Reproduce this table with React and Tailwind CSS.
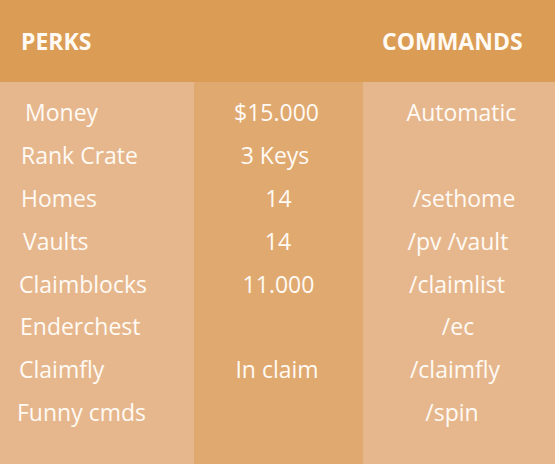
const ROWS = [
  { perk: "Money", pl: "pl-[25px]", value: "$15.000", vn: "pr-[4px]", cmd: "Automatic", cn: "pl-[5px]" },
  { perk: "Rank Crate", pl: "pl-[21px]", value: "3 Keys", vn: "pr-[7px]", cmd: "", cn: "" },
  { perk: "Homes", pl: "pl-[21px]", value: "14", vn: "pl-0", cmd: "/sethome", cn: "pl-[10px]" },
  { perk: "Vaults", pl: "pl-[23px]", value: "14", vn: "pr-[1px]", cmd: "/pv /vault", cn: "pr-[2px]" },
  { perk: "Claimblocks", pl: "pl-[19px]", value: "11.000", vn: "pl-0", cmd: "/claimlist", cn: "pr-[4px]" },
  { perk: "Enderchest", pl: "pl-[20px]", value: "", vn: "", cmd: "/ec", cn: "pr-[2px]" },
  { perk: "Claimfly", pl: "pl-[19px]", value: "In claim", vn: "pr-[3px]", cmd: "/claimfly", cn: "pr-[8px]" },
  { perk: "Funny cmds", pl: "pl-[17px]", value: "", vn: "", cmd: "/spin", cn: "pr-[14px]" },
];

export default function App() {
  return (
    <div className="w-[555px] h-[464px] overflow-hidden text-[#fffaf4] font-['Open_Sans',sans-serif]">
      {/* header */}
      <div className="flex h-[82px] items-center bg-[#db9d55] text-[23px] font-bold leading-[30px]">
        <div className="w-[194px] pl-[21px]">PERKS</div>
        <div className="w-[169px]"></div>
        <div className="w-[192px] pl-[19px]">COMMANDS</div>
      </div>

      {/* body: three coloured columns */}
      <div className="grid h-[382px] grid-cols-[194px_169px_192px] text-[23px]">
        <div className="bg-[#e6b78d] pt-[9px]">
          {ROWS.map((r) => (
            <div key={r.perk} className={`h-[42.9px] leading-[43px] ${r.pl}`}>
              {r.perk}
            </div>
          ))}
        </div>
        <div className="bg-[#dfa970] pt-[9px]">
          {ROWS.map((r) => (
            <div key={r.perk} className={`h-[42.9px] leading-[43px] text-center ${r.vn}`}>
              {r.value}
            </div>
          ))}
        </div>
        <div className="bg-[#e6b78d] pt-[9px]">
          {ROWS.map((r) => (
            <div key={r.perk} className={`h-[42.9px] leading-[43px] text-center ${r.cn}`}>
              {r.cmd}
            </div>
          ))}
        </div>
      </div>
    </div>
  );
}
